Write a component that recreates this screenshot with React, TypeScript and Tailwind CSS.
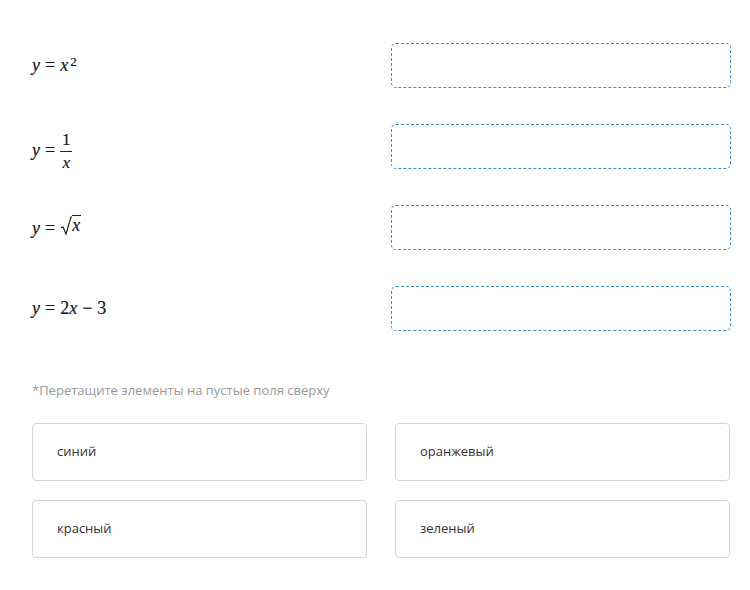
const mathFont = { fontFamily: '"Liberation Serif", "DejaVu Serif", serif' };

function Var({ children }: { children: React.ReactNode }) {
  return <span className="italic">{children}</span>;
}

function Eq() {
  return <span className="mx-[5px]">=</span>;
}

const formulas = [
  <span key="a" className="flex items-baseline">
    <Var>y</Var>
    <Eq />
    <Var>x</Var>
    <sup className="ml-[2px] text-[13px] relative -top-[5px]">2</sup>
  </span>,
  <span key="b" className="flex items-center translate-y-[4px]">
    <Var>y</Var>
    <Eq />
    <span className="inline-flex flex-col items-center leading-none">
      <span className="px-[1px] pb-[3px] text-[17px]">1</span>
      <span className="w-[12px] border-t border-[#222]" />
      <span className="pt-[2px] text-[17px] italic">x</span>
    </span>
  </span>,
  <span key="c" className="flex items-baseline">
    <Var>y</Var>
    <Eq />
    <span className="inline-flex items-end">
      <svg width="12" height="20" viewBox="0 0 12 20" className="translate-y-[2px]">
        <path d="M1 12 L3 11 L6 18 L11 1 L12 1" fill="none" stroke="#222" strokeWidth="1.2" />
      </svg>
      <span className="border-t border-[#222] italic pr-[1px] leading-[18px]">x</span>
    </span>
  </span>,
  <span key="d" className="flex items-baseline">
    <Var>y</Var>
    <Eq />
    <span>2</span>
    <Var>x</Var>
    <span className="mx-[5px]">−</span>
    <span>3</span>
  </span>,
];

const options = ["синий", "оранжевый", "красный", "зеленый"];

export default function App() {
  return (
    <div className="w-[750px] h-[590px] bg-white pl-8 pr-[19px] pt-[43px]" style={{ fontFamily: '"Open Sans", "Noto Sans", sans-serif' }}>
      <div className="flex flex-col gap-[36px]">
        {formulas.map((f, i) => (
          <div key={i} className="flex items-center h-[45px]">
            <div className="w-[359px] shrink-0 text-[18px] text-[#1a1a1a] [-webkit-text-stroke:0.2px_#1a1a1a]" style={mathFont}>
              {f}
            </div>
            <div className="w-[340px] shrink-0 h-[45px] rounded-[5px] border border-dashed border-[#3d8fcc]" />
          </div>
        ))}
      </div>

      <p className="mt-[50px] text-[13px] text-[#9a9a9a]">*Перетащите элементы на пустые поля сверху</p>

      <div className="mt-[22px] grid grid-cols-[335px_335px] gap-x-[28px] gap-y-[19px]">
        {options.map((o) => (
          <div key={o} className="h-[58px] rounded-[4px] border border-[#d4d4d4] flex items-center pl-[24px] text-[13px] text-[#333]">
            {o}
          </div>
        ))}
      </div>
    </div>
  );
}
